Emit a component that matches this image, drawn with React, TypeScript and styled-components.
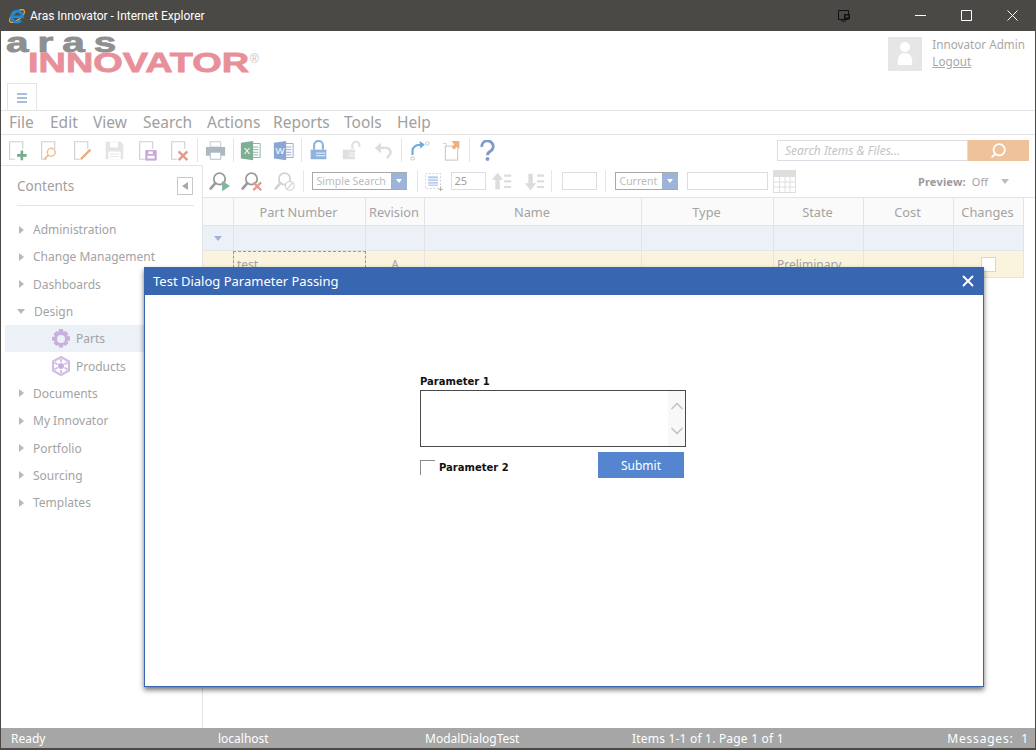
import React from "react";
import styled, { createGlobalStyle } from "styled-components";
import { Search, ChevronUp, ChevronDown, X } from "lucide-react";

const GlobalStyle = createGlobalStyle`
  html, body { margin: 0; padding: 0; background: #fff; }
  * { box-sizing: border-box; }
`;

const FONT = `"Noto Sans", "DejaVu Sans", sans-serif`;

const Window = styled.div`
  position: relative;
  width: 1036px;
  height: 750px;
  display: flex;
  flex-direction: column;
  overflow: hidden;
  background: #fff;
  font-family: ${FONT};
  color: #a3a3a3;
  border-left: 1px solid #4b4946;
  border-right: 1px solid #4b4946;
  border-bottom: 2px solid #4b4946;
`;

const TitleBar = styled.div`
  flex: 0 0 31px;
  margin: 0 -1px;
  display: flex;
  align-items: center;
  background: #4b4946;
  color: #fff;
  padding: 0 1px 0 8px;
  font: 12px Roboto, sans-serif;
`;

const TitleText = styled.span`
  margin-left: 4px;
  flex: 1;
`;

const WinButton = styled.div<{ $gap?: number }>`
  width: 46px;
  margin-right: ${({ $gap }) => $gap ?? 0}px;
  display: flex;
  justify-content: center;
`;

const Header = styled.div`
  flex: 0 0 52px;
  display: flex;
  justify-content: space-between;
`;

const Logo = styled.svg`
  overflow: visible;
`;

const UserBox = styled.div`
  display: flex;
  gap: 10px;
  padding: 5px 10px 0 0;
`;

const Avatar = styled.div`
  width: 34px;
  height: 34px;
  margin-top: 1px;
  background: #e6e6e6;
  display: flex;
  align-items: center;
  justify-content: center;
`;

const UserText = styled.div`
  font-size: 11.7px;
  line-height: 17px;
  color: #a8a8a8;
`;

const Logout = styled.div`
  text-decoration: underline;
`;

const TabStrip = styled.div`
  flex: 0 0 27px;
  padding-left: 6px;
  border-bottom: 1px solid #e4e4e4;
`;

const Tab = styled.div`
  width: 30px;
  height: 27px;
  background: #fff;
  border: 1px solid #e4e4e4;
  border-bottom: none;
  display: flex;
  flex-direction: column;
  gap: 2px;
  align-items: center;
  justify-content: center;
  padding-top: 2px;
`;

const TabLine = styled.i`
  display: block;
  width: 10px;
  height: 2px;
  background: #a9bddd;
`;

const MenuBar = styled.div`
  flex: 0 0 23px;
  display: flex;
  align-items: center;
  padding: 0 0 1px 8px;
  border-bottom: 1px solid #e4e4e4;
  font-size: 15.5px;
  color: #a0a0a0;
`;

const MenuItem = styled.span<{ $w: number }>`
  width: ${({ $w }) => $w}px;
`;

const MainToolbar = styled.div`
  flex: 0 0 30px;
  display: flex;
  align-items: center;
`;

const ToolButton = styled.div<{ $w?: number }>`
  width: ${({ $w }) => $w ?? 32.5}px;
  height: 24px;
  display: flex;
  align-items: center;
  justify-content: center;
  flex: none;
  svg {
    width: 21px;
    height: 21px;
  }
`;

const Sep = styled.div<{ $l?: number; $r?: number }>`
  width: 1px;
  height: 24px;
  margin: 0 ${({ $r }) => $r ?? 1}px 0 ${({ $l }) => $l ?? 1}px;
  background: #e6e6e6;
  flex: none;
`;

const SearchBox = styled.div`
  margin-left: auto;
  margin-right: 6px;
  display: flex;
  height: 21px;
`;

const SearchInput = styled.div`
  width: 191px;
  border: 1px solid #dcdce4;
  font-size: 12px;
  font-style: italic;
  color: #c4c4c4;
  padding: 1px 7px;
`;

const SearchButton = styled.div`
  width: 61px;
  background: #f0c29b;
  color: #fff;
  display: flex;
  align-items: center;
  justify-content: center;
`;

const SearchGlyph = styled(Search)`
  transform: scaleX(-1);
`;

const Body = styled.div`
  flex: 1;
  display: flex;
  min-height: 0;
`;

const Sidebar = styled.div`
  width: 202px;
  flex: none;
  border-top: 1px solid #e4e4e4;
  border-right: 1px solid #e4e4e4;
  padding-left: 4px;
`;

const SidebarHead = styled.div`
  margin: 0 8px 0 12px;
  height: 40px;
  display: flex;
  align-items: center;
  justify-content: space-between;
  border-bottom: 1px solid #e4e4e4;
  font-size: 13.5px;
  color: #a0a0a0;
`;

const Collapse = styled.div`
  width: 16px;
  height: 18px;
  margin-right: 1px;
  border: 1px solid #c8c8c8;
  display: flex;
  align-items: center;
  justify-content: center;
`;

const Tree = styled.div`
  padding-top: 10px;
`;

const TreeRow = styled.div<{ $selected?: boolean; $child?: boolean }>`
  height: 27.3px;
  display: flex;
  align-items: center;
  font-size: 12px;
  color: #a3a3a3;
  padding-left: ${({ $child }) => ($child ? "46px" : "12px")};
  background: ${({ $selected }) => ($selected ? "#ecf0f7" : "transparent")};
`;

const Arrow = styled.span<{ $open?: boolean }>`
  width: 0;
  height: 0;
  ${({ $open }) =>
    $open
      ? "border-left: 4px solid transparent; border-right: 4px solid transparent; border-top: 5px solid #b9b9b9; margin-right: 9px;"
      : "border-top: 4px solid transparent; border-bottom: 4px solid transparent; border-left: 5px solid #b9b9b9; margin: 0 9px 0 2px;"}
`;

const TreeIcon = styled.span`
  width: 20px;
  height: 20px;
  margin-right: 5px;
  display: flex;
`;

const Content = styled.div`
  flex: 1;
  min-width: 0;
  display: flex;
  flex-direction: column;
`;

const SubToolbar = styled.div`
  flex: 0 0 33px;
  display: flex;
  align-items: center;
  border-bottom: 1px solid #e4e4e4;
`;

const SmallSep = styled(Sep)`
  height: 22px;
`;

const Select = styled.div<{ $w: number }>`
  width: ${({ $w }) => $w}px;
  height: 18px;
  flex: none;
  display: flex;
  justify-content: space-between;
  border: 1px solid #a9a9a9;
  border-right: none;
  font-size: 10.5px;
  line-height: 17px;
  color: #bcbcbc;
  padding-left: 4px;
  white-space: nowrap;
`;

const SelectDrop = styled.span`
  width: 16px;
  background: #9db4d8;
  display: flex;
  align-items: center;
  justify-content: center;
  &::after {
    content: "";
    border-left: 3px solid transparent;
    border-right: 3px solid transparent;
    border-top: 4px solid #fff;
  }
`;

const FieldBox = styled.div<{ $w: number; $ml?: number }>`
  width: ${({ $w }) => $w}px;
  height: 18px;
  margin-left: ${({ $ml }) => $ml ?? 0}px;
  border: 1px solid #dcdce4;
  font-size: 11px;
  line-height: 16px;
  color: #a0a0a0;
  padding-left: 3px;
  flex: none;
`;

const CalendarSlot = styled.span`
  margin-left: 5px;
  display: flex;
`;

const Preview = styled.div`
  margin-left: auto;
  margin-right: 26px;
  display: flex;
  align-items: center;
  gap: 6px;
  font-size: 11px;
  color: #a3a3a3;
`;

const PreviewLabel = styled.b`
  color: #9a9a9a;
  letter-spacing: 0.2px;
`;

const PreviewCaret = styled.span`
  margin-left: 7px;
  border-left: 4px solid transparent;
  border-right: 4px solid transparent;
  border-top: 5px solid #bdbdbd;
`;

const GridRow = styled.div<{ $bg: string; $h: number }>`
  display: grid;
  grid-template-columns: 31px 132px 59px 217px 132px 90px 90px 70px;
  width: 821px;
  height: ${({ $h }) => $h}px;
  background: ${({ $bg }) => $bg};
  border-bottom: 1px solid #e4e4e4;
`;

const Cell = styled.div<{ $head?: boolean; $left?: boolean; $focus?: boolean }>`
  display: flex;
  align-items: center;
  justify-content: ${({ $left }) => ($left ? "flex-start" : "center")};
  font-size: ${({ $head }) => ($head ? "12.8px" : "12px")};
  color: #a3a3a3;
  padding-left: ${({ $left }) => ($left ? "3px" : "0")};
  padding-right: ${({ $head }) => ($head ? "2px" : "0")};
  border-right: 1px solid #e4e4e4;
  ${({ $focus }) => ($focus ? "border: 1px dashed #8f8ff0; margin-left: -1px;" : "")}
`;

const FilterCaret = styled.span`
  border-left: 4px solid transparent;
  border-right: 4px solid transparent;
  border-top: 5px solid #9db4d8;
`;

const RowCheck = styled.span`
  width: 15px;
  height: 15px;
  background: #fff;
  border: 1px solid #d6d6d6;
`;

const StatusBar = styled.div`
  flex: 0 0 20px;
  margin: 0 -1px;
  background: #a6a6a6;
  color: #fff;
  font-size: 12px;
  display: flex;
  align-items: center;
  padding: 0 7px 0 11px;
`;

const StatusCell = styled.span<{ $w?: number; $track?: number }>`
  ${({ $w }) => ($w ? `width: ${$w}px;` : "margin-left: auto;")}
  letter-spacing: ${({ $track }) => $track ?? 0}px;
  white-space: nowrap;
`;

const Dialog = styled.div`
  position: absolute;
  left: 143px;
  top: 267px;
  width: 840px;
  height: 420px;
  background: #fff;
  border: 1px solid #3966b0;
  box-shadow: 0 3px 5px rgba(0, 0, 0, 0.55);
`;

const DialogTitle = styled.div`
  height: 28px;
  margin: -1px -1px 0;
  background: #3966b0;
  color: #fff;
  font-size: 13px;
  display: flex;
  align-items: center;
  justify-content: space-between;
  padding: 0 7px 0 9px;
`;

const Form = styled.div`
  width: 266px;
  margin: 80px 0 0 275px;
`;

const ParamLabel = styled.label`
  display: block;
  font: bold 10px/14px "DejaVu Sans", sans-serif;
  color: #111;
`;

const TextBox = styled.div`
  width: 266px;
  height: 57px;
  margin-top: 1px;
  border: 1px solid #4a4a4a;
  display: flex;
  justify-content: flex-end;
`;

const TextScroll = styled.div`
  width: 17px;
  background: #f8f8f8;
  color: #c4c4c4;
  display: flex;
  flex-direction: column;
  justify-content: space-between;
  align-items: center;
  padding: 5px 0;
`;

const FormFooter = styled.div`
  display: flex;
  align-items: flex-start;
  margin-top: 5px;
`;

const CheckLine = styled.div`
  flex: 1;
  display: flex;
  align-items: center;
  gap: 4px;
  margin-top: 8px;
`;

const CheckBox = styled.span`
  width: 15px;
  height: 15px;
  border-top: 1px solid #8a8a8a;
  border-left: 1px solid #8a8a8a;
`;

const Submit = styled.button`
  width: 86px;
  height: 26px;
  margin-right: 2px;
  border: none;
  padding: 0;
  background: #5585cf;
  color: #fff;
  font: 12px ${FONT};
`;

const IeIcon = () => (
  <svg width="18" height="18" viewBox="0 0 18 18" fill="none">
    <ellipse cx="9" cy="9" rx="9" ry="3.8" transform="rotate(-38 9 9)" stroke="#eeb02f" strokeWidth="1.3" />
    <path d="M3.5 9.800H14.500A5.500 5.500 0 1 0 13 13.500" stroke="#1e88d8" strokeWidth="2.700" />
  </svg>
);

const DocIcon = ({ color, children }: { color: string; children?: React.ReactNode }) => (
  <svg viewBox="0 0 24 24" fill="none">
    <path d="M9 22H3V2h15v8" stroke="#cfcfcf" strokeWidth="1.300" />
    <g stroke={color} fill={color}>{children}</g>
  </svg>
);

const icons: React.ReactNode[] = [
  <DocIcon color="#78ab8e" key="new"><path d="M17 12v11M11.500 17.500h11" strokeWidth="3" /></DocIcon>,
  <DocIcon color="#f0c29b" key="open"><circle cx="14" cy="14" r="4.500" fill="#fff" strokeWidth="1.800" /><path d="M10.500 17.500L6 22" strokeWidth="2.400" /></DocIcon>,
  <DocIcon color="#eda978" key="edit"><path d="M21 11L10 22" strokeWidth="2.600" /></DocIcon>,
  <svg key="save" viewBox="0 0 24 24"><path d="M2 2h17l3 3v17H2z" fill="#e4e4e4" /><path d="M7 2.500h9v6H7zM5 13h14v9H5z" fill="#fff" /><path d="M7 16h10M7 19h10" stroke="#e4e4e4" /></svg>,
  <DocIcon color="#c9a9d8" key="saveas"><path d="M10 12h12v11H10z" /><path d="M13 13h5v3h-5zM12 18h8v3h-8z" fill="#fff" stroke="none" /></DocIcon>,
  <DocIcon color="#e39a8d" key="delete"><path d="M11 13l10 10M21 13L11 23" strokeWidth="2.800" /></DocIcon>,
];

const PrintIcon = () => (
  <svg viewBox="0 0 24 24"><path d="M6 2h12v6H6z" fill="#fff" stroke="#b9c6cf" /><path d="M1 8h22v10H1z" fill="#aab8c2" /><path d="M6 14h12v8H6z" fill="#fff" stroke="#aab8c2" /></svg>
);

const OfficeIcon = ({ color, letter }: { color: string; letter: string }) => (
  <svg viewBox="0 0 24 24">
    <path d="M12 4h11v16H12z" fill="#fff" stroke={color} />
    <path d="M15 8h6M15 11h6M15 14h6M15 17h6" stroke={color} />
    <path d="M1 3l14-2v22L1 21z" fill={color} />
    <text x="8" y="16" fill="#fff" fontSize="11" fontFamily="Liberation Sans" textAnchor="middle">{letter}</text>
  </svg>
);

const LockIcon = ({ open }: { open?: boolean }) => (
  <svg viewBox="0 0 24 24" fill="none">
    <path d={open ? "M13 10V6a4 4 0 0 1 8 0v2" : "M7 11V6a5 5 0 0 1 10 0v5"} stroke={open ? "#e0e0e0" : "#8fb3dc"} strokeWidth="2.400" />
    <path d={open ? "M2 11h14v11H2z" : "M3 11h18v11H3z"} fill={open ? "#e0e0e0" : "#8fb3dc"} />
    <path d="M9 15h11M9 18h11" stroke="#fff" />
  </svg>
);

const UndoIcon = () => (
  <svg viewBox="0 0 24 24" fill="none"><path d="M6 9h9a5 5 0 0 1 3 9l-2 3" stroke="#dcdcdc" strokeWidth="2.800" /><path d="M9 3L2 9l7 6z" fill="#dcdcdc" /></svg>
);

const FlowIcon = () => (
  <svg viewBox="0 0 24 24" fill="none"><path d="M4 17V12a7 7 0 0 1 9-6" stroke="#6ea9dd" strokeWidth="2.400" /><path d="M12 1l6 4-5 5z" fill="#6ea9dd" /><circle cx="21" cy="4" r="2" stroke="#bdbdbd" /><circle cx="4" cy="21" r="2" stroke="#bdbdbd" /></svg>
);

const CopyIcon = () => (
  <svg viewBox="0 0 24 24" fill="none"><path d="M5 7h14v16H5z" fill="#fff" stroke="#cfcfcf" strokeWidth="1.400" /><path d="M2 4h4v3" stroke="#cfcfcf" /><path d="M12 1h9v9l-3-2-3 3-3-3 3-3z" fill="#f0b07e" /></svg>
);

const HelpIcon = () => (
  <svg viewBox="0 0 24 26" fill="none"><path d="M5 8.500a7 7 0 1 1 10.500 5.500c-2.500 1.400-3.500 2-3.500 5" stroke="#7f9cc8" strokeWidth="3.600" /><circle cx="12" cy="23.500" r="2.400" fill="#7f9cc8" /></svg>
);

const FindIcon = ({ mark }: { mark: "run" | "clear" | "off" }) => {
  const ring = mark === "off" ? "#d2d2d2" : "#9a9a9a";
  return (
    <svg viewBox="0 0 24 24" fill="none">
      <circle cx="12" cy="9" r="6.500" stroke={ring} strokeWidth="2" />
      <path d="M7.500 13.500L1 21" stroke={ring} strokeWidth="3" />
      {mark === "run" && <path d="M15 11l9 6-9 6z" fill="#80b59a" />}
      {mark === "clear" && <path d="M14 13l9 9M23 13l-9 9" stroke="#e39a8d" strokeWidth="2.600" />}
      {mark === "off" && (
        <>
          <circle cx="18" cy="17" r="5" fill="#fff" stroke="#d2d2d2" strokeWidth="1.400" />
          <path d="M15 20.500l6-7" stroke="#d2d2d2" strokeWidth="1.400" />
        </>
      )}
    </svg>
  );
};

const PageIcon = () => (
  <svg viewBox="0 0 24 24" fill="none"><path d="M3 3h17v17H3z" stroke="#c8c8d0" strokeDasharray="2 2" /><path d="M6 6h11v11H6z" fill="#b9cce8" /><path d="M6 9h11M6 12h11M6 15h11" stroke="#fff" /><path d="M20 18v5M18 21h5" stroke="#aaa" /></svg>
);

const SortIcon = ({ down }: { down?: boolean }) => (
  <svg viewBox="0 0 24 24" fill="#dcdcdc">
    <path d={down ? "M5 3h5v11h4l-6.500 8L1 14h4z" : "M5 21h5V10h4L7.500 2 1 10h4z"} />
    <path d="M15 4h8v2.500h-8zM15 10.500h8v2.500h-8zM15 17h8v2.500h-8z" />
  </svg>
);

const CalendarIcon = () => (
  <svg width="23" height="23" viewBox="0 0 23 23">
    <path d="M0 0h23v23H0z" fill="#dedede" />
    <path d="M1 7h21v15H1z" fill="#fff" />
    <path d="M1 12h21M1 17h21M6.500 7v15M12 7v15M17 7v15" stroke="#dedede" />
  </svg>
);

const GearIcon = () => (
  <svg width="20" height="20" viewBox="0 0 20 20">
    <path
      fillRule="evenodd"
      fill="#c9b0dc"
      d="M8 0h4l.5 3 2-1 3 3-1.500 2 3 .5v4l-3 .5 1.500 2-3 3-2-1.500-.5 3H8l-.5-3-2 1.500-3-3 1.500-2-3-.5V8l3-.5L2.500 5l3-3 2 1zM10 6a4 4 0 1 0 0 8 4 4 0 0 0 0-8z"
    />
  </svg>
);

const HexIcon = () => (
  <svg width="20" height="20" viewBox="0 0 20 20">
    <path d="M10 1l8 4.500v9L10 19l-8-4.500v-9z" fill="none" stroke="#d4bde4" strokeWidth="2.200" />
    <circle cx="10" cy="10" r="3" fill="#c9b0dc" />
    <path d="M10 3v3M10 14v3M3.500 6.500l3 2M16.500 6.500l-3 2M3.500 13.500l3-2M16.500 13.500l-3-2" stroke="#d4bde4" strokeWidth="2" />
  </svg>
);

const PipIcon = () => (
  <svg width="12" height="12" viewBox="0 0 12 12" fill="none">
    <path d="M.5.500h10v9H.500z" stroke="#111" />
    <path d="M6 4h6v5H6z" fill="#111" />
    <path d="M7.500 5.500h3v2h-3z" fill="#4b4946" />
    <path d="M3 11h5" stroke="#111" />
  </svg>
);

const MinIcon = () => (
  <svg width="11" height="11" viewBox="0 0 11 11"><path d="M0 5.500h11" stroke="#fff" /></svg>
);

const MaxIcon = () => (
  <svg width="11" height="11" viewBox="0 0 11 11" fill="none"><path d="M.5.500h10v10H.500z" stroke="#fff" /></svg>
);

const CloseIcon = () => (
  <svg width="11" height="11" viewBox="0 0 11 11"><path d="M.5.500l10 10M10.500.500l-10 10" stroke="#fff" /></svg>
);

const menus: [string, number][] = [
  ["File", 41],
  ["Edit", 43],
  ["View", 50],
  ["Search", 64],
  ["Actions", 66],
  ["Reports", 71],
  ["Tools", 53],
  ["Help", 40],
];

const columns = ["", "Part Number", "Revision", "Name", "Type", "State", "Cost", "Changes"];

const tree = [
  { label: "Administration" },
  { label: "Change Management" },
  { label: "Dashboards" },
  { label: "Design", open: true },
  { label: "Parts", child: "gear", selected: true },
  { label: "Products", child: "hex" },
  { label: "Documents" },
  { label: "My Innovator" },
  { label: "Portfolio" },
  { label: "Sourcing" },
  { label: "Templates" },
];

export default function App() {
  return (
    <>
      <GlobalStyle />
      <Window>
        <TitleBar>
          <IeIcon />
          <TitleText>Aras Innovator - Internet Explorer</TitleText>
          <WinButton $gap={30}><PipIcon /></WinButton>
          <WinButton><MinIcon /></WinButton>
          <WinButton><MaxIcon /></WinButton>
          <WinButton><CloseIcon /></WinButton>
        </TitleBar>

        <Header>
          <Logo width="260" height="50" viewBox="0 0 260 50">
            <text transform="translate(5 21) scale(1.5 1)" fill="#8f8f8f" stroke="#8f8f8f" strokeWidth="0.8" fontFamily="Liberation Sans" fontWeight="700" fontSize="27" letterSpacing="6">aras</text>
            <text x="27" y="41" fill="#e88f9a" stroke="#e88f9a" strokeWidth="0.8" fontFamily="Liberation Sans" fontWeight="700" fontSize="28" textLength="221" lengthAdjust="spacingAndGlyphs">INNOVATOR</text>
            <text x="249" y="32" fill="#c4c4c4" fontFamily="Liberation Sans" fontSize="12">®</text>
          </Logo>
          <UserBox>
            <Avatar>
              <svg width="16" height="26" viewBox="0 0 16 26" fill="#fff">
                <circle cx="8" cy="6" r="5" />
                <path d="M1 24c-1-7 1-12 7-12s8 5 7 12z" />
              </svg>
            </Avatar>
            <UserText>
              <div>Innovator Admin</div>
              <Logout>Logout</Logout>
            </UserText>
          </UserBox>
        </Header>

        <TabStrip>
          <Tab><TabLine /><TabLine /><TabLine /></Tab>
        </TabStrip>

        <MenuBar>
          {menus.map(([m, w]) => <MenuItem key={m} $w={w}>{m}</MenuItem>)}
        </MenuBar>

        <MainToolbar>
          {icons.map((ic, i) => <ToolButton key={i}>{ic}</ToolButton>)}
          <Sep />
          <ToolButton><PrintIcon /></ToolButton>
          <Sep />
          <ToolButton><OfficeIcon color="#7fae94" letter="X" /></ToolButton>
          <ToolButton><OfficeIcon color="#8aa6d2" letter="W" /></ToolButton>
          <Sep />
          <ToolButton><LockIcon /></ToolButton>
          <ToolButton><LockIcon open /></ToolButton>
          <ToolButton><UndoIcon /></ToolButton>
          <Sep />
          <ToolButton><FlowIcon /></ToolButton>
          <ToolButton><CopyIcon /></ToolButton>
          <Sep />
          <ToolButton><HelpIcon /></ToolButton>
          <SearchBox>
            <SearchInput>Search Items &amp; Files...</SearchInput>
            <SearchButton><SearchGlyph size={17} strokeWidth={2.500} /></SearchButton>
          </SearchBox>
        </MainToolbar>

        <Body>
          <Sidebar>
            <SidebarHead>
              Contents
              <Collapse>
                <svg width="6" height="8" viewBox="0 0 6 8"><path d="M6 0v8L0 4z" fill="#a8a8a8" /></svg>
              </Collapse>
            </SidebarHead>
            <Tree>
              {tree.map((t) => (
                <TreeRow key={t.label} $selected={t.selected} $child={Boolean(t.child)}>
                  {t.child ? (
                    <TreeIcon>{t.child === "gear" ? <GearIcon /> : <HexIcon />}</TreeIcon>
                  ) : (
                    <Arrow $open={t.open} />
                  )}
                  {t.label}
                </TreeRow>
              ))}
            </Tree>
          </Sidebar>

          <Content>
            <SubToolbar>
              <ToolButton><FindIcon mark="run" /></ToolButton>
              <ToolButton><FindIcon mark="clear" /></ToolButton>
              <ToolButton><FindIcon mark="off" /></ToolButton>
              <SmallSep $l={2} $r={8} />
              <Select $w={95}>Simple Search<SelectDrop /></Select>
              <SmallSep $l={10} $r={3} />
              <ToolButton $w={26}><PageIcon /></ToolButton>
              <FieldBox $w={35} $ml={4}>25</FieldBox>
              <ToolButton><SortIcon /></ToolButton>
              <ToolButton><SortIcon down /></ToolButton>
              <SmallSep $l={0} $r={10} />
              <FieldBox $w={35} />
              <SmallSep $l={8} $r={9} />
              <Select $w={63}>Current<SelectDrop /></Select>
              <FieldBox $w={81} $ml={9} />
              <CalendarSlot><CalendarIcon /></CalendarSlot>
              <Preview>
                <PreviewLabel>Preview:</PreviewLabel> Off <PreviewCaret />
              </Preview>
            </SubToolbar>

            <GridRow $bg="#fafafa" $h={28}>
              {columns.map((c, i) => <Cell key={i} $head>{c}</Cell>)}
            </GridRow>
            <GridRow $bg="#ecf0f7" $h={25}>
              {columns.map((_, i) => <Cell key={i}>{i === 0 && <FilterCaret />}</Cell>)}
            </GridRow>
            <GridRow $bg="#faf4de" $h={27}>
              <Cell />
              <Cell $left $focus>test</Cell>
              <Cell>A</Cell>
              <Cell />
              <Cell />
              <Cell $left>Preliminary</Cell>
              <Cell />
              <Cell><RowCheck /></Cell>
            </GridRow>
          </Content>
        </Body>

        <StatusBar>
          <StatusCell $w={207}>Ready</StatusCell>
          <StatusCell $w={207}>localhost</StatusCell>
          <StatusCell $w={207}>ModalDialogTest</StatusCell>
          <StatusCell $w={200} $track={0.2}>Items 1-1 of 1. Page 1 of 1</StatusCell>
          <StatusCell $track={0.8}>Messages:&nbsp; 1</StatusCell>
        </StatusBar>

        <Dialog>
          <DialogTitle>
            Test Dialog Parameter Passing
            <X size={18} strokeWidth={2.500} />
          </DialogTitle>
          <Form>
            <ParamLabel>Parameter 1</ParamLabel>
            <TextBox>
              <TextScroll>
                <ChevronUp size={20} strokeWidth={2} />
                <ChevronDown size={20} strokeWidth={2} />
              </TextScroll>
            </TextBox>
            <FormFooter>
              <CheckLine>
                <CheckBox />
                <ParamLabel>Parameter 2</ParamLabel>
              </CheckLine>
              <Submit>Submit</Submit>
            </FormFooter>
          </Form>
        </Dialog>
      </Window>
    </>
  );
}
